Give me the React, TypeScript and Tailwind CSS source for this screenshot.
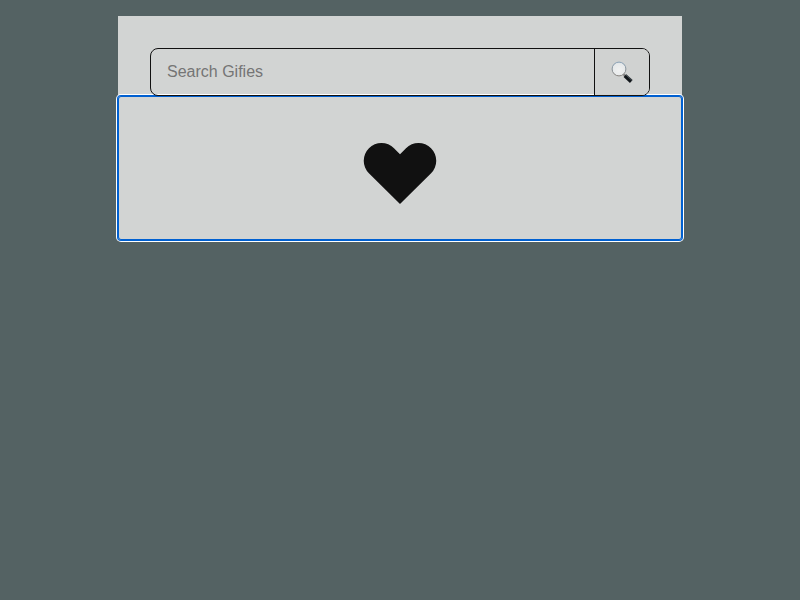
function MagnifierIcon() {
  return (
    <svg className="block h-6 w-6" viewBox="0 0 24 24">
      <defs>
        <radialGradient id="lens" cx="0.5" cy="0.6" r="0.6">
          <stop offset="0" stopColor="#f0f1f1" />
          <stop offset="0.8" stopColor="#e6e9ea" />
          <stop offset="1" stopColor="#d3dce2" />
        </radialGradient>
        <linearGradient id="rim" x1="0" y1="0" x2="0" y2="1">
          <stop offset="0" stopColor="#8ba3b7" />
          <stop offset="1" stopColor="#85817c" />
        </linearGradient>
      </defs>
      <path d="M13.2 14.1l2 1.8" stroke="#7d7d7d" strokeWidth="2" />
      <path d="M14.9 15.6l6.400 5.900" stroke="#11161a" strokeWidth="4" />
      <path d="M15.800 14.700l6.100 5.600" stroke="#626c72" strokeWidth="0.8" />
      <circle cx="9" cy="9" r="6.9" fill="url(#lens)" stroke="url(#rim)" strokeWidth="1" />
    </svg>
  );
}

function SearchBar() {
  return (
    <form className="relative z-10 flex h-12 w-[500px] overflow-hidden rounded-lg border border-[#111]" onSubmit={(e) => e.preventDefault()}>
      <input
        className="min-w-0 flex-1 bg-transparent px-4 text-base text-[#111] outline-none placeholder:text-[#757575]"
        placeholder="Search Gifies"
      />
      <button aria-label="Search" className="flex w-[55px] items-center justify-center border-l border-[#111] bg-[#d0d2d1]">
        <MagnifierIcon />
      </button>
    </form>
  );
}

export default function App() {
  return (
    <div className="min-h-screen bg-[#546263] pt-4 font-['Liberation_Sans',Arial,sans-serif]">
      <main className="mx-auto w-[564px] bg-[#d2d4d3]">
        <div className="flex justify-center pt-8">
          <SearchBar />
        </div>
        <button
          aria-label="Favorites"
          className="flex h-36 w-full items-start justify-center rounded-[3px] pt-[46px] shadow-[inset_0_0_0_1px_#0060d1,0_0_0_1px_#0060d1,0_0_0_2px_#fff]"
        >
          <svg className="block h-[64px] w-[74px]" viewBox="363 142 74 64">
            <path
              d="M400 154.2l-6-6A17.700 17.700 0 0 0 368.900 173.200L400 204l31.100-30.800A17.700 17.700 0 0 0 406 148.200z"
              fill="#111"
            />
          </svg>
        </button>
      </main>
    </div>
  );
}
